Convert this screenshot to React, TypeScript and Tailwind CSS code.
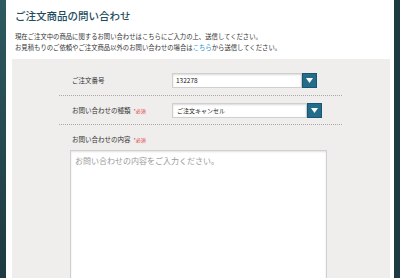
import type { ReactNode } from 'react'

const JP = { fontFamily: '"Noto Sans CJK JP", "Noto Sans", sans-serif' }

function ArrowButton(): JSX.Element {
  return (
    <div className="w-[15px] h-[15px] shrink-0 bg-[#236c8a] border border-[#1b5670] flex items-center justify-center">
      <svg width="7" height="5" viewBox="0 0 7 5">
        <path d="M0 0 H7 L3.5 5 Z" fill="#ffffff" />
      </svg>
    </div>
  )
}

function Required(): JSX.Element {
  return <span className="ml-[3px] text-[5px] text-[#e0413b]">*必須</span>
}

function Row({ label, children, required }: { label: string; children?: ReactNode; required?: boolean }): JSX.Element {
  return (
    <div className="flex items-center">
      <div className="w-[113px] pl-[13px] text-[6.5px] text-[#333] leading-none">
        {label}
        {required && <Required />}
      </div>
      {children}
    </div>
  )
}

export default function App(): JSX.Element {
  return (
    <div className="w-[400px] h-[278px] overflow-hidden flex bg-[#1d3a40]" style={JP}>
      <div className="w-[6px] shrink-0 bg-gradient-to-b from-[#2e5a60] to-[#1d3a40]" />
      <div className="flex-1 bg-white flex flex-col">
        <div className="pt-[9px] pl-[9px] text-[10.5px] leading-[13px] font-medium text-[#234b5c]">
          ご注文商品の問い合わせ
        </div>
        <div className="mt-[2px] ml-[6px] mr-[6px] h-[2px] bg-[#c6c6c6]" />
        <div className="pl-[9px] pt-[7px] text-[6.35px] leading-[11px] text-[#333]">
          <div>現在ご注文中の商品に関するお問い合わせはこちらにご入力の上、送信してください。</div>
          <div>
            お見積もりのご依頼やご注文商品以外のお問い合わせの場合は
            <span className="text-[#1a8fd3]">こちら</span>
            から送信してください。
          </div>
        </div>
        <div className="mt-[6px] ml-[6px] mr-[4px] flex-1 bg-[#efeeec]">
          <div className="ml-[47px] w-[283px]">
            <div className="pt-[14px] pb-[7px] border-b border-dotted border-[#a9a9a9]">
              <Row label="ご注文番号">
                <div className="w-[130px] h-[15px] bg-white border border-[#cfcfcf] shadow-[inset_0_1px_2px_rgba(0,0,0,0.15)] flex items-center pl-[3px] text-[6.5px] text-[#222]">
                  132278
                </div>
                <ArrowButton />
              </Row>
            </div>
            <div className="pt-[7px] pb-[6px] border-b border-dotted border-[#a9a9a9]">
              <Row label="お問い合わせの種類" required>
                <div className="w-[135px] h-[15px] bg-white border border-[#cfcfcf] shadow-[inset_0_1px_2px_rgba(0,0,0,0.15)] flex items-center pl-[4px] text-[6px] text-[#222]">
                  ご注文キャンセル
                </div>
                <ArrowButton />
              </Row>
            </div>
            <div className="pt-[11px]">
              <Row label="お問い合わせの内容" required />
            </div>
          </div>
          <div className="mt-[7px] ml-[58px] w-[257px] h-[140px] bg-white border border-[#d0d0d0] shadow-[inset_0_1px_2px_rgba(0,0,0,0.12)] pl-[4px] pt-[4px] text-[8px] leading-[12px] text-[#9a9a9a]">
            お問い合わせの内容をご入力ください。
          </div>
        </div>
      </div>
      <div className="w-[6px] shrink-0 bg-[#1d3a40]" />
    </div>
  )
}
